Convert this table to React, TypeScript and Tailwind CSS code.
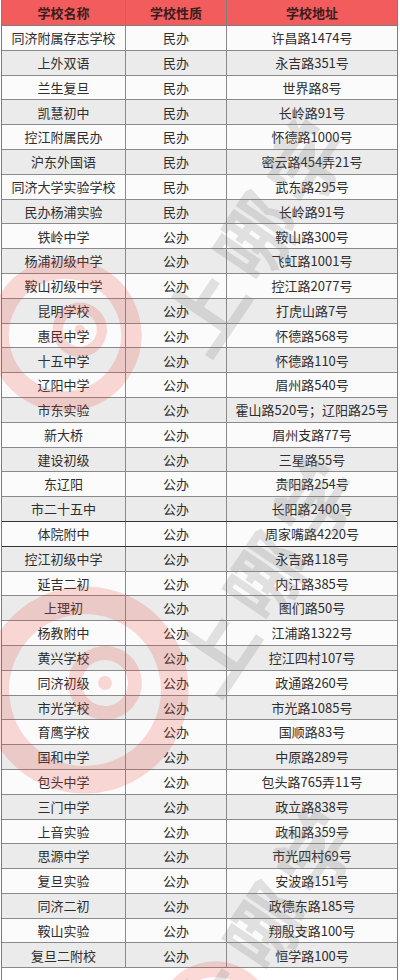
const rows: [string, string, string][] = [
  ["同济附属存志学校", "民办", "许昌路1474号"],
  ["上外双语", "民办", "永吉路351号"],
  ["兰生复旦", "民办", "世界路8号"],
  ["凯慧初中", "民办", "长岭路91号"],
  ["控江附属民办", "民办", "怀德路1000号"],
  ["沪东外国语", "民办", "密云路454弄21号"],
  ["同济大学实验学校", "民办", "武东路295号"],
  ["民办杨浦实验", "民办", "长岭路91号"],
  ["铁岭中学", "公办", "鞍山路300号"],
  ["杨浦初级中学", "公办", "飞虹路1001号"],
  ["鞍山初级中学", "公办", "控江路2077号"],
  ["昆明学校", "公办", "打虎山路7号"],
  ["惠民中学", "公办", "怀德路568号"],
  ["十五中学", "公办", "怀德路110号"],
  ["辽阳中学", "公办", "眉州路540号"],
  ["市东实验", "公办", "霍山路520号；辽阳路25号"],
  ["新大桥", "公办", "眉州支路77号"],
  ["建设初级", "公办", "三星路55号"],
  ["东辽阳", "公办", "贵阳路254号"],
  ["市二十五中", "公办", "长阳路2400号"],
  ["体院附中", "公办", "周家嘴路4220号"],
  ["控江初级中学", "公办", "永吉路118号"],
  ["延吉二初", "公办", "内江路385号"],
  ["上理初", "公办", "图们路50号"],
  ["杨教附中", "公办", "江浦路1322号"],
  ["黄兴学校", "公办", "控江四村107号"],
  ["同济初级", "公办", "政通路260号"],
  ["市光学校", "公办", "市光路1085号"],
  ["育鹰学校", "公办", "国顺路83号"],
  ["国和中学", "公办", "中原路289号"],
  ["包头中学", "公办", "包头路765弄11号"],
  ["三门中学", "公办", "政立路838号"],
  ["上音实验", "公办", "政和路359号"],
  ["思源中学", "公办", "市光四村69号"],
  ["复旦实验", "公办", "安波路151号"],
  ["同济二初", "公办", "政德东路185号"],
  ["鞍山实验", "公办", "翔殷支路100号"],
  ["复旦二附校", "公办", "恒学路100号"],
];

// watermark logo, drawn faint over the table
function Logo({ className }: { className: string }) {
  return (
    <svg viewBox="0 0 200 200" className={className}>
      <circle cx="100" cy="100" r="78" fill="none" stroke="#e8453c" strokeWidth="24" />
      <circle cx="112" cy="86" r="26" fill="none" stroke="#e8453c" strokeWidth="12" />
      <circle cx="112" cy="86" r="6" fill="#e8453c" />
    </svg>
  );
}

function Mark({ className }: { className: string }) {
  return (
    <div
      className={
        "pointer-events-none absolute whitespace-nowrap text-[80px] font-bold tracking-[10px] text-[#777] opacity-20 -rotate-[56deg] " +
        className
      }
    >
      上哪学
    </div>
  );
}

export default function App() {
  return (
    <div
      className="relative h-[980px] w-[400px] overflow-hidden bg-white text-[13px] text-[#2e2e2e]"
      style={{ fontFamily: '"Microsoft YaHei", "Noto Sans CJK SC", sans-serif' }}
    >
      <div className="ml-[1px] w-[397px] border-x border-[#7d7d7d]">
        <div className="grid h-[26px] grid-cols-[124px_101px_1fr] border-b border-[#7d7d7d] bg-[#f25c5c] font-bold text-[#3b1c1c]">
          <div className="flex items-center justify-center border-r border-[#7d7d7d]">学校名称</div>
          <div className="flex items-center justify-center border-r border-[#7d7d7d]">学校性质</div>
          <div className="flex items-center justify-center">学校地址</div>
        </div>
        {rows.map(([name, kind, addr], i) => (
          <div
            key={name}
            className={
              "grid h-[24.8px] grid-cols-[124px_101px_1fr] border-b " +
              (i === 19 || i === 20 ? "border-[#333] " : "border-[#8a8a8a] ") +
              (i % 2 === 0 ? "bg-[#fbfbfb]" : "bg-[#ebebeb]")
            }
          >
            <div className="flex items-center justify-center border-r border-[#8a8a8a]">{name}</div>
            <div className="flex items-center justify-center border-r border-[#8a8a8a]">{kind}</div>
            <div className="flex items-center justify-center">{addr}</div>
          </div>
        ))}
        <div className="h-[20px] bg-white" />
      </div>

      <Logo className="pointer-events-none absolute left-[-20px] top-[250px] h-[170px] w-[170px] rotate-[30deg] opacity-20" />
      <Logo className="pointer-events-none absolute left-[-30px] top-[575px] h-[230px] w-[230px] rotate-[30deg] opacity-20" />
      <Logo className="pointer-events-none absolute left-[150px] top-[955px] h-[130px] w-[130px] rotate-[30deg] opacity-20" />

      <Mark className="left-[120px] top-[170px]" />
      <Mark className="left-[130px] top-[510px]" />
      <Mark className="left-[130px] top-[860px]" />
    </div>
  );
}
